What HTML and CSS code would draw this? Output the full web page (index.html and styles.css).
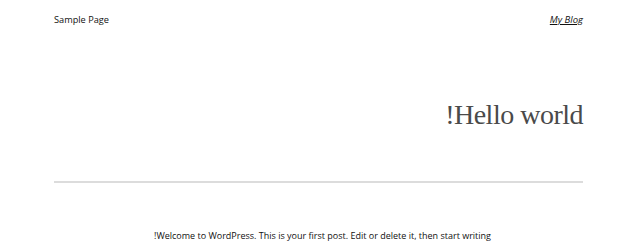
FILE: index.html
```html
<!DOCTYPE html>
<html lang="en" dir="rtl">
<head>
<meta charset="utf-8">
<title>My Blog</title>
<link rel="stylesheet" href="styles.css">
</head>
<body>
<header class="site-header">
  <a class="site-title" href="#">My Blog</a>
  <nav class="site-nav"><a href="#">Sample Page</a></nav>
</header>
<main class="post">
  <h1 class="post-title">Hello world!</h1>
  <hr class="separator">
  <div class="post-content">
    <p>Welcome to WordPress. This is your first post. Edit or delete it, then start writing!</p>
  </div>
</main>
</body>
</html>
```

FILE: styles.css
```css
html, body {
  margin: 0;
  padding: 0;
  background: #ffffff;
}
body {
  font-family: "Open Sans", "Noto Sans", sans-serif;
  color: #111;
}
.site-header {
  display: flex;
  justify-content: space-between;
  align-items: baseline;
  padding: 6px 36px 0 54px;
  height: 20px;
}
.site-title {
  font-size: 9.5px;
  font-style: italic;
  color: #111;
  text-decoration: underline;
  text-underline-offset: 1px;
}
.site-nav a {
  font-size: 9.2px;
  color: #111;
  text-decoration: none;
}
.post {
  padding: 0 36px 0 54px;
}
.post-title {
  margin: 72px 0 0;
  font-family: "Liberation Serif", serif;
  font-weight: 400;
  font-size: 28px;
  letter-spacing: -0.5px;
  line-height: 34px;
  color: #4a4a4a;
}
.separator {
  margin: 49px 0 0;
  border: 0;
  height: 2px;
  background: #dcdcdc;
}
.post-content {
  margin: 46px 92px 0 0;
}
.post-content p {
  margin: 0;
  font-size: 9px;
  line-height: 14px;
  color: #111;
}
```
